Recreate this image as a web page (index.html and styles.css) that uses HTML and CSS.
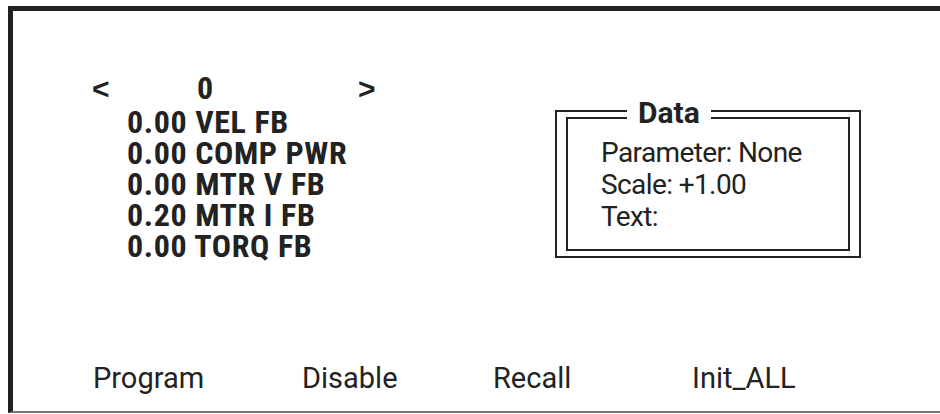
FILE: index.html
```html
<!DOCTYPE html>
<html lang="en">
<head>
    <meta charset="UTF-8">
    <title>Monitor</title>
    <link rel="stylesheet" href="styles.css">
</head>
<body>

    <div class="screen">
        <div class="main">
            <div class="readout">
                <div class="nav">
                    <span class="arrow arrow-left">&lt;</span>
                    <span class="page">0</span>
                    <span class="arrow">&gt;</span>
                </div>
                <div class="value">0.00 VEL FB</div>
                <div class="value">0.00 COMP PWR</div>
                <div class="value">0.00 MTR V FB</div>
                <div class="value">0.20 MTR I FB</div>
                <div class="value">0.00 TORQ FB</div>
            </div>

            <div class="data-box">
                <div class="data-title">Data</div>
                <div class="data-inner">
                    <div>Parameter: None</div>
                    <div>Scale: +1.00</div>
                    <div>Text:</div>
                </div>
            </div>
        </div>

        <div class="menu">
            <span>Program</span>
            <span>Disable</span>
            <span>Recall</span>
            <span>Init_ALL</span>
        </div>
    </div>

</body>
</html>
```

FILE: styles.css
```css
* {
    box-sizing: border-box;
}

body {
    margin: 0;
    background-color: white;
    color: #222;
    font-family: 'Roboto', 'Liberation Sans', sans-serif;
}

.screen {
    margin: 6px 0 0 8px;
    height: 407px;
    border-top: 5px solid #222;
    border-left: 5px solid #222;
    border-bottom: 2px solid #777;
    display: flex;
    flex-direction: column;
}

.main {
    display: flex;
    flex: 1;
}

.readout {
    padding: 62px 0 0 79px;
    width: 542px;
    font-family: 'Roboto Condensed', 'Roboto', sans-serif;
    font-weight: bold;
    font-size: 32px;
    letter-spacing: 0.6px;
    line-height: 31px;
}

.nav {
    display: flex;
    margin-bottom: 3px;
}

.arrow {
    width: 18px;
    font-family: 'Liberation Sans', sans-serif;
    font-size: 30px;
}

.arrow-left {
    margin-right: 87px;
}

.page {
    width: 161px;
}

.value {
    padding-left: 35px;
}

.data-box {
    position: relative;
    margin-top: 99px;
    width: 306px;
    height: 148px;
    border: 2px solid #222;
    padding: 5px 9px;
}

.data-title {
    position: absolute;
    top: -14px;
    left: 70px;
    padding: 0 11px;
    background-color: white;
    font-weight: bold;
    font-size: 30px;
    line-height: 30px;
}

.data-inner {
    height: 100%;
    border: 2px solid #222;
    padding: 18px 0 0 33px;
    font-size: 28px;
    letter-spacing: -0.6px;
    line-height: 32px;
}

.menu {
    display: grid;
    grid-template-columns: 209px 191px 199px auto;
    padding: 0 0 17px 80px;
    font-size: 29px;
    line-height: 32px;
}
```
